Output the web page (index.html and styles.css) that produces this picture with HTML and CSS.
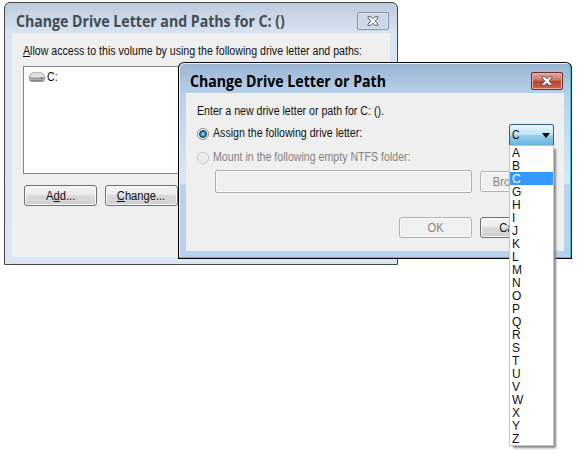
FILE: index.html
```
<!DOCTYPE html>
<html lang="en">
<head>
<meta charset="utf-8">
<title>Change Drive Letter or Path</title>
<link rel="stylesheet" href="styles.css">
</head>
<body>
<main class="desktop">
  <section class="window paths-window">
    <header class="titlebar">
      <h1>Change Drive Letter and Paths for C: ()</h1>
      <button class="close" aria-label="Close"><svg width="12" height="10" viewBox="0 0 12 10"><path d="M1 .7h3L6 2.8 8 .7h3v1.2L8.2 5 11 8.1v1.2H8L6 7.2 4 9.3H1V8.1L3.8 5 1 1.9z" fill="#fff" stroke="#555e69"/></svg></button>
    </header>
    <div class="client">
      <p class="caption"><u>A</u>llow access to this volume by using the following drive letter and paths:</p>
      <div class="volumes">
        <div class="volume">
          <svg width="16" height="10" viewBox="0 0 16 10"><path d="M3.5.5h9L15.5 4v3.5q0 2-2 2h-11q-2 0-2-2V4z" fill="#aaa" stroke="#999"/><path d="M3.5.5h9L15 4.2H1z" fill="#ddd"/><path d="M1 4.5h14" stroke="#eee"/><path d="M2 8.5h11" stroke="#888"/><path d="M12 5h1.5v2H12z" fill="#37a52c"/></svg>
          <span class="narrow">C:</span>
        </div>
      </div>
      <div class="actions">
        <button class="btn"><span>A<u>d</u>d...</span></button>
        <button class="btn"><span><u>C</u>hange...</span></button>
      </div>
    </div>
  </section>

  <section class="window edit-window">
    <header class="titlebar">
      <h1>Change Drive Letter or Path</h1>
      <button class="close" aria-label="Close"><svg width="12" height="10" viewBox="0 0 12 10"><path d="M1 .7h3L6 2.8 8 .7h3v1.2L8.2 5 11 8.1v1.2H8L6 7.2 4 9.3H1V8.1L3.8 5 1 1.9z" fill="#fff" stroke="#59505a"/></svg></button>
    </header>
    <div class="client">
      <p class="prompt">Enter a new drive letter or path for C: ().</p>
      <div class="option assign">
        <i class="radio checked"></i><span class="option-label">Assign the following drive letter:</span>
        <div class="combo"><span class="narrow">C</span><i class="arrow"></i>
          <ul class="menu">
            <li>A</li><li>B</li><li class="selected">C</li><li>G</li><li>H</li><li>I</li><li>J</li><li>K</li><li>L</li><li>M</li><li>N</li><li>O</li><li>P</li><li>Q</li><li>R</li><li>S</li><li>T</li><li>U</li><li>V</li><li>W</li><li>X</li><li>Y</li><li>Z</li>
          </ul>
        </div>
      </div>
      <div class="option mount"><i class="radio"></i><span class="option-label">Mount in the following empty NTFS folder:</span></div>
      <div class="folder"><div class="field"></div><button class="btn disabled"><span>Browse...</span></button></div>
      <div class="confirm"><button class="btn disabled"><span>OK</span></button><button class="btn"><span>Cancel</span></button></div>
    </div>
  </section>
</main>
</body>
</html>
```
FILE: styles.css
```
* { box-sizing: border-box; }
body { margin: 0; background: #fff; font: 12px/14px "Liberation Sans", Arial, sans-serif; color: #111; }
h1, p, ul { margin: 0; padding: 0; }
svg { display: block; }
u { text-decoration: underline; text-underline-offset: 1px; }
.desktop { position: relative; width: 577px; height: 453px; overflow: hidden; }

.window { position: absolute; width: 394px; padding: 0 7px 7px; border: 1px solid #444; border-radius: 6px 6px 0 0; }
.paths-window { left: 4px; top: 2px; height: 263px; background: linear-gradient(#bdccdc, #d7e4f2 31px, #dae6f4); }
.edit-window { left: 178px; top: 62px; height: 197px; border-color: #111 #000 #000; background: linear-gradient(#9ab4d1, #b8d0ea 31px, #dae8f6 120px, #b9d1ea 122px); box-shadow: inset -1px -1px #35c6d9, inset 1px 1px #e3f1fb; }
.titlebar { display: flex; height: 30px; padding: 9px 1px 0 4px; justify-content: space-between; align-items: flex-start; }
h1 { margin-top: -1px; font: bold 16px/20px "Open Sans", "Noto Sans", sans-serif; white-space: nowrap; color: #414c55; transform: scaleX(.883); transform-origin: left; }
.edit-window h1 { color: #000; }
.close { display: flex; flex: none; align-items: center; justify-content: center; width: 32px; height: 18px; padding: 0; border: 1px solid #8492aa; border-radius: 2px; background: #cbd8e6; box-shadow: inset 0 0 0 1px #dae5f0; }
.edit-window .close { border-color: #682d31; background: linear-gradient(#dfa69c, #cd7868 45%, #b7412e 50%, #ca6855); box-shadow: inset 0 0 0 1px #e8afa5; }
.client { padding: 11px 11px 0; background: #efefef; }
.paths-window .client { height: 224px; }
.edit-window .client { height: 158px; }

/* Condensed dialog lettering */
.caption, .prompt, .option-label, .narrow { white-space: nowrap; transform: scaleX(.884); transform-origin: left; }
.caption { width: 360px; }
.btn span { display: inline-block; transform: scaleX(.93); }

.volumes { height: 108px; margin-top: 8px; padding: 3px 5px; border: 1px solid #828790; background: #fff; }
.volume { display: flex; align-items: center; gap: 2px; }
.actions { display: flex; gap: 8px; margin: 11px 0 0 1px; }
.btn { width: 73px; height: 21px; padding: 0; flex: none; border: 1px solid #707070; border-radius: 3px; background: linear-gradient(#f3f3f3, #ebebeb 48%, #dadada 50%, #cfcfcf); box-shadow: inset 0 0 0 1px #fafafa; font: inherit; color: #111; }
.btn.disabled { color: #838383; border-color: #adb2b5; background: #f0f0f0; }

.option { display: flex; align-items: center; height: 22px; }
.assign { margin-top: 6px; }
.option-label { margin-top: -4px; }
.radio { width: 12px; height: 12px; margin: -2px 4px 0 0; flex: none; border: 1px solid #c3c3c3; border-radius: 50%; background: #eaeaea; box-shadow: inset 0 0 0 1px #f8f8f8; }
.radio.checked { border-color: #8e8f8f; background: radial-gradient(circle at 5px 5px, #6dcff6 0 1px, #187aa9 2.5px, #173454 3.5px, #e0e5e8 4.3px); }
.combo { position: relative; display: flex; align-items: center; justify-content: space-between; width: 45px; height: 22px; margin: 0 -1px 0 auto; padding: 0 3px 0 2px; border: 1px solid #2c628b; border-radius: 2px; background: linear-gradient(#e5f4fc, #c4e5f6 49%, #98d1ef 50%, #68b3db); }
.arrow { border: 4px solid transparent; border-top: 5px solid #000; border-bottom: 0; }
.menu { position: absolute; z-index: 2; left: -1px; top: 20px; width: 45px; height: 301px; border: 1px solid #bfc3d4; background: #fff; box-shadow: 3px 3px 2px -1px #888; list-style: none; }
.menu li { height: 13px; padding-left: 2px; line-height: 14px; }
.menu .selected { background: #3399ff; color: #fff; }
.mount { height: 14px; margin-top: 6px; color: #838383; }
.folder { display: flex; align-items: center; gap: 8px; height: 23px; margin: 4px 0 0 18px; }
.field { width: 257px; height: 23px; flex: none; border: 1px solid #afafaf; border-radius: 2px; box-shadow: inset 0 0 0 1px #fafafa; }
.confirm { display: flex; justify-content: flex-end; gap: 8px; margin-top: 24px; }
```
